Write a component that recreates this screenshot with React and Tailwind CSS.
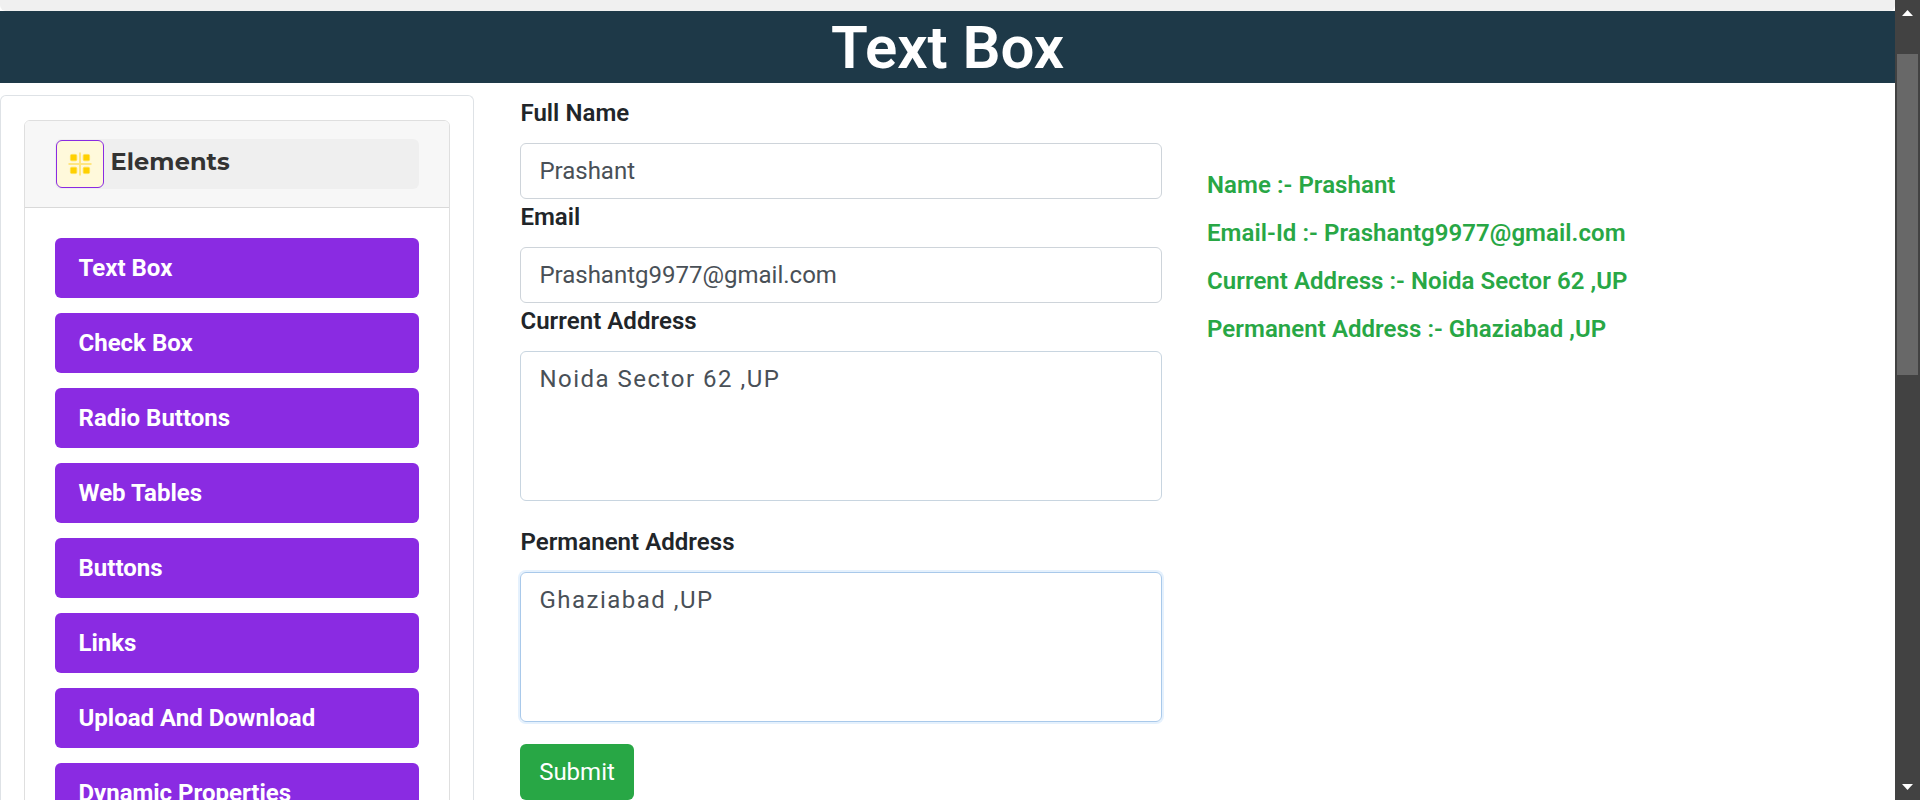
const menu = [
  'Text Box',
  'Check Box',
  'Radio Buttons',
  'Web Tables',
  'Buttons',
  'Links',
  'Upload And Download',
  'Dynamic Properties',
];

const results = [
  'Name :- Prashant',
  'Email-Id :- Prashantg9977@gmail.com',
  'Current Address :- Noida Sector 62 ,UP',
  'Permanent Address :- Ghaziabad ,UP',
];

function GridIcon() {
  return (
    <svg width="46" height="46" viewBox="0 0 46 46">
      <rect x="22" y="11.5" width="2" height="23" fill="#ffe680" />
      <rect x="11.5" y="22" width="23" height="2" fill="#ffe680" />
      <g fill="#ffd000" stroke="#ffe04d" strokeWidth="0.8">
        <rect x="13.4" y="13.4" width="6.4" height="6.4" rx="1.4" />
        <rect x="26.2" y="13.4" width="6.4" height="6.4" rx="1.4" />
        <rect x="13.4" y="26.2" width="6.4" height="6.4" rx="1.4" />
        <rect x="26.2" y="26.2" width="6.4" height="6.4" rx="1.4" />
      </g>
    </svg>
  );
}

function Sidebar() {
  return (
    <aside className="mt-3 h-[705px] w-[474px] shrink-0 overflow-hidden rounded-t-md border border-b-0 border-[#dee2e6] px-[23px] pt-6">
      <div className="h-[900px] rounded-md border border-[#dfdfdf]">
        <div className="h-[87px] rounded-t-[5px] border-b border-[#d9d9d9] bg-[#f7f7f7] px-[30px] pt-[18px]">
          <button className="flex h-[50px] w-full rounded-md bg-[#efefef] p-px text-left">
            <span className="block h-12 w-12 shrink-0 rounded-md border border-[#8a2be2] bg-[#fff9db]">
              <GridIcon />
            </span>
            <span className="ml-[6.5px] pt-[4px] font-['Montserrat','Inter',sans-serif] text-[24px] leading-9 font-bold tracking-[0.1px] text-[#333]">
              Elements
            </span>
          </button>
        </div>
        <nav className="flex flex-col gap-[15px] px-[30px] pt-[30px]">
          {menu.map((item) => (
            <button
              key={item}
              className="h-[60px] rounded-md bg-[#8a2be2] px-[23.5px] text-left text-[24px] leading-9 font-bold text-white"
            >
              {item}
            </button>
          ))}
        </nav>
      </div>
    </aside>
  );
}

function Form() {
  const label = 'mb-3 block h-9 pl-[0.4px] text-[24px] leading-9 font-semibold tracking-[0.05px]';
  const field = 'block w-full rounded-md border px-[18.4px] text-[24px] leading-9 text-[#495057]';
  return (
    <form className="mt-3 ml-[46px] w-[642px] shrink-0">
      <label className={label}>Full Name</label>
      <div className={`${field} h-14 border-[#ced4da] py-[9px]`}>Prashant</div>
      <label className={label}>Email</label>
      <div className={`${field} h-14 border-[#ced4da] py-[9px]`}>Prashantg9977@gmail.com</div>
      <label className={label}>Current Address</label>
      <div className={`${field} h-[150px] border-[#c8d5e0] py-[9px] tracking-[1.5px]`}>
        Noida Sector 62 ,UP
      </div>
      <label className={`${label} mt-[23px]`}>Permanent Address</label>
      <div className={`${field} h-[150px] border-[#a9c9ea] py-[9px] tracking-[1.5px] shadow-[0_0_0_2px_#e5f1fd]`}>
        Ghaziabad ,UP
      </div>
      <div className="mt-[22px] flex h-14 w-[114px] items-center justify-center rounded-md bg-[#28a745] text-[24px] leading-9 text-white">
        Submit
      </div>
    </form>
  );
}

function Scrollbar() {
  return (
    <div className="flex h-full w-[25px] shrink-0 flex-col items-center bg-[#424242]">
      <svg width="25" height="54" viewBox="0 0 25 54" className="block shrink-0">
        <path d="M12.5 10 L18 16 H7 Z" fill="#fff" />
      </svg>
      <div className="h-[321px] w-[21px] bg-[#686868]" />
      <div className="grow" />
      <svg width="25" height="25" viewBox="0 0 25 25" className="block shrink-0">
        <path d="M7 9 H18 L12.5 15 Z" fill="#fff" />
      </svg>
    </div>
  );
}

export default function App() {
  return (
    <div className="flex h-[800px] w-[1920px] overflow-hidden bg-white font-['Roboto',sans-serif] text-[#212529]">
      <div className="flex h-full w-[1895px] shrink-0 flex-col overflow-hidden">
        <div className="h-[11px] shrink-0 rounded-b-md bg-[#f0f0f0]" />
        <h1 className="h-[72px] shrink-0 bg-[#1e3948] pt-px text-center text-[60px] leading-[72px] font-semibold tracking-[-0.1px] text-white">
          Text Box
        </h1>
        <main className="flex min-h-0 grow items-start">
          <Sidebar />
          <Form />
          <section className="mt-[84px] ml-[45px] flex flex-col gap-3 text-[24px] leading-9 font-semibold tracking-[0.06px] text-[#28a745]">
            {results.map((line) => (
              <p key={line}>{line}</p>
            ))}
          </section>
        </main>
      </div>
      <Scrollbar />
    </div>
  );
}
